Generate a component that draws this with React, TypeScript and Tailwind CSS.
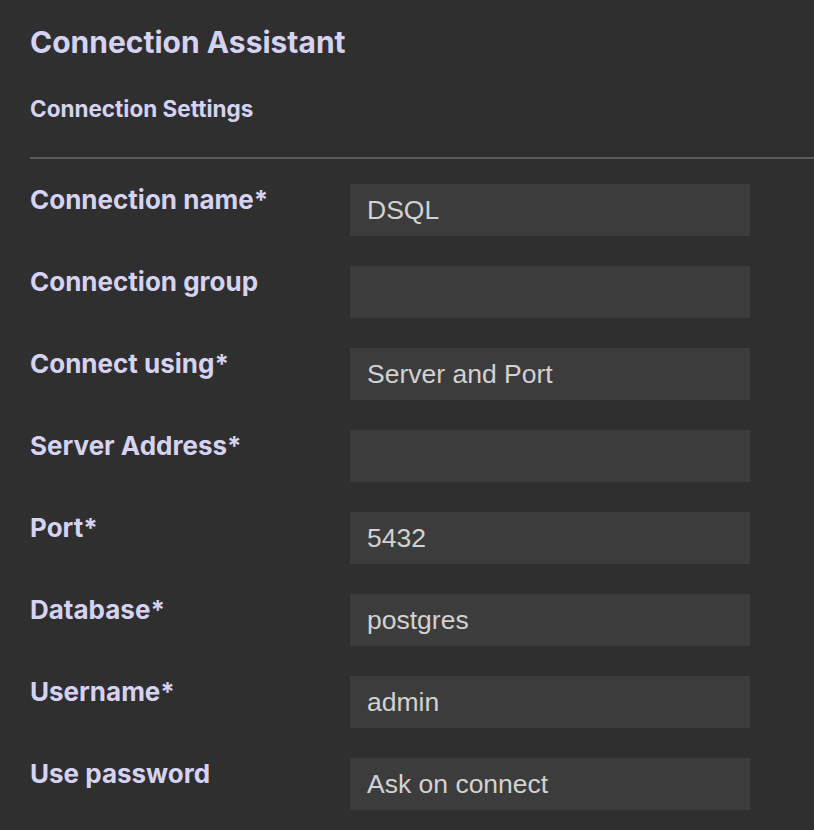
const rows: { label: string; value: string }[] = [
  { label: 'Connection name*', value: 'DSQL' },
  { label: 'Connection group', value: '' },
  { label: 'Connect using*', value: 'Server and Port' },
  { label: 'Server Address*', value: '' },
  { label: 'Port*', value: '5432' },
  { label: 'Database*', value: 'postgres' },
  { label: 'Username*', value: 'admin' },
  { label: 'Use password', value: 'Ask on connect' },
]

export default function App() {
  return (
    <div className="min-h-[830px] w-[814px] overflow-hidden bg-[#2f2f2f] pl-[30px] pt-[24px] font-['Inter',sans-serif]">
      <h1 className="text-[30px] font-bold leading-[36px] text-[#d6d2f2]">Connection Assistant</h1>
      <h2 className="mt-[35px] text-[22.5px] font-bold leading-[28px] text-[#d6d2f2]">Connection Settings</h2>
      <div className="mt-[34px] h-[2px] bg-[#5b5b5b]" />
      <div className="mt-[25px] flex flex-col gap-[30px]">
        {rows.map((r) => (
          <div key={r.label} className="flex items-start">
            <div className="w-[320px] text-[26px] font-bold leading-[32px] text-[#d6d2f2]">{r.label}</div>
            <div className="flex h-[52px] w-[400px] items-center bg-[#3c3c3c] px-[17px] pt-[1px] font-['Liberation_Sans',sans-serif] text-[26.5px] text-[#d2d2d2]">
              {r.value}
            </div>
          </div>
        ))}
      </div>
    </div>
  )
}
